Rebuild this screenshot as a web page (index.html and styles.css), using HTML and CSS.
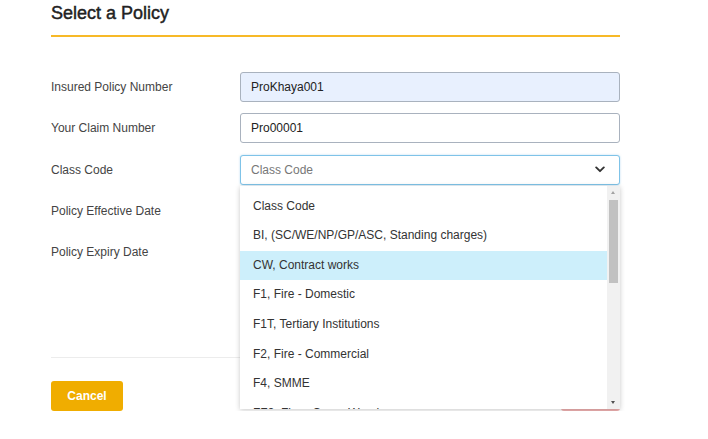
FILE: index.html
```html
<!DOCTYPE html>
<html>
<head>
<meta charset="utf-8">
<link rel="stylesheet" href="styles.css">
</head>
<body>
<div class="page">
  <h1 class="title">Select a Policy</h1>
  <div class="rule"></div>
  <div class="form">
    <div class="row">
      <label class="label">Insured Policy Number</label>
      <div class="field input autofill">ProKhaya001</div>
    </div>
    <div class="row">
      <label class="label">Your Claim Number</label>
      <div class="field input">Pro00001</div>
    </div>
    <div class="row">
      <label class="label">Class Code</label>
      <div class="select-wrap">
        <div class="field select">
          <span class="placeholder">Class Code</span>
          <svg class="chev" width="10" height="7" viewBox="0 0 10 7"><path d="M1.2 1.4 L5 5.2 L8.8 1.4" fill="none" stroke="#333" stroke-width="1.9" stroke-linecap="round" stroke-linejoin="round"/></svg>
        </div>
        <div class="menu">
          <ul class="options">
            <li class="opt">Class Code</li>
            <li class="opt">BI, (SC/WE/NP/GP/ASC, Standing charges)</li>
            <li class="opt active">CW, Contract works</li>
            <li class="opt">F1, Fire - Domestic</li>
            <li class="opt">F1T, Tertiary Institutions</li>
            <li class="opt">F2, Fire - Commercial</li>
            <li class="opt">F4, SMME</li>
            <li class="opt">FF3, Fire - Cargo Warehouse</li>
          </ul>
          <div class="scrollbar">
            <span class="arrow up"></span>
            <span class="thumb"></span>
            <span class="arrow down"></span>
          </div>
        </div>
      </div>
    </div>
    <div class="row">
      <label class="label">Policy Effective Date</label>
      <div class="field input"></div>
    </div>
    <div class="row">
      <label class="label">Policy Expiry Date</label>
      <div class="field input"></div>
    </div>
  </div>
  <div class="sep"></div>
  <div class="footer">
    <button class="btn cancel">Cancel</button>
    <button class="btn next">Next</button>
  </div>
</div>
</body>
</html>
```
FILE: styles.css
```css
* { box-sizing: border-box; }
html, body { margin: 0; padding: 0; background: #fff; }
body {
  font-family: "Liberation Sans", Arial, sans-serif;
  font-size: 12px;
  color: #444;
}
.page {
  width: 569px;
  margin-left: 51px;
  padding-top: 2px;
}
.title {
  margin: 0;
  font-size: 18px;
  line-height: 22px;
  font-weight: normal;
  color: #222;
  -webkit-text-stroke: 0.45px #222;
}
.rule {
  margin-top: 11px;
  height: 2px;
  background: #f7b928;
}
.form {
  margin-top: 35px;
  display: flex;
  flex-direction: column;
  gap: 11.3px;
}
.row {
  display: flex;
  align-items: center;
  height: 30px;
}
.label {
  width: 189px;
  flex: none;
  color: #444;
  line-height: 14px;
}
.field {
  width: 380px;
  height: 30px;
  border: 1px solid #a9b2be;
  border-radius: 3px;
  display: flex;
  align-items: center;
  padding-left: 10px;
  color: #222;
  background: #fff;
}
.autofill { background: #e8f0fe; }
.select-wrap {
  position: relative;
  width: 380px;
}
.select {
  border: 1.5px solid #7fc3e8;
  box-shadow: 0 0 2px rgba(102, 180, 230, 0.5);
  justify-content: space-between;
  padding-right: 14px;
}
.placeholder { color: #777; }
.chev { display: block; }
.menu {
  position: absolute;
  top: 31px;
  left: 0;
  width: 380px;
  height: 223px;
  background: #fff;
  box-shadow: 0 1px 5px rgba(0, 0, 0, 0.22);
  display: flex;
  overflow: hidden;
  z-index: 10;
}
.options {
  list-style: none;
  margin: 0;
  padding: 6px 0 0 0;
  flex: 1;
}
.opt {
  height: 29.6px;
  line-height: 29.6px;
  padding-left: 13px;
  color: #333;
  white-space: nowrap;
}
.opt.active { background: #cdeffb; }
.scrollbar {
  position: relative;
  width: 13px;
  flex: none;
  background: #f1f1f1;
}
.thumb {
  position: absolute;
  left: 2px;
  right: 2px;
  top: 14px;
  height: 83px;
  background: #c1c1c1;
}
.arrow {
  position: absolute;
  left: 4px;
  width: 0;
  height: 0;
  border-left: 2.5px solid transparent;
  border-right: 2.5px solid transparent;
}
.arrow.up { top: 5px; border-bottom: 3px solid #a3a3a3; }
.arrow.down { bottom: 5px; border-top: 3px solid #505050; }
.sep {
  margin-top: 89.8px;
  height: 1px;
  background: #ececec;
}
.footer {
  margin-top: 23px;
  display: flex;
  justify-content: space-between;
}
.btn {
  height: 30px;
  border: 0;
  border-radius: 3px;
  font-family: "Liberation Sans", Arial, sans-serif;
  font-size: 12px;
  font-weight: bold;
  color: #fff;
  padding: 0;
}
.cancel {
  width: 72px;
  background: #f0ad00;
}
.next {
  width: 59px;
  background: #f2b3b3;
}
```
